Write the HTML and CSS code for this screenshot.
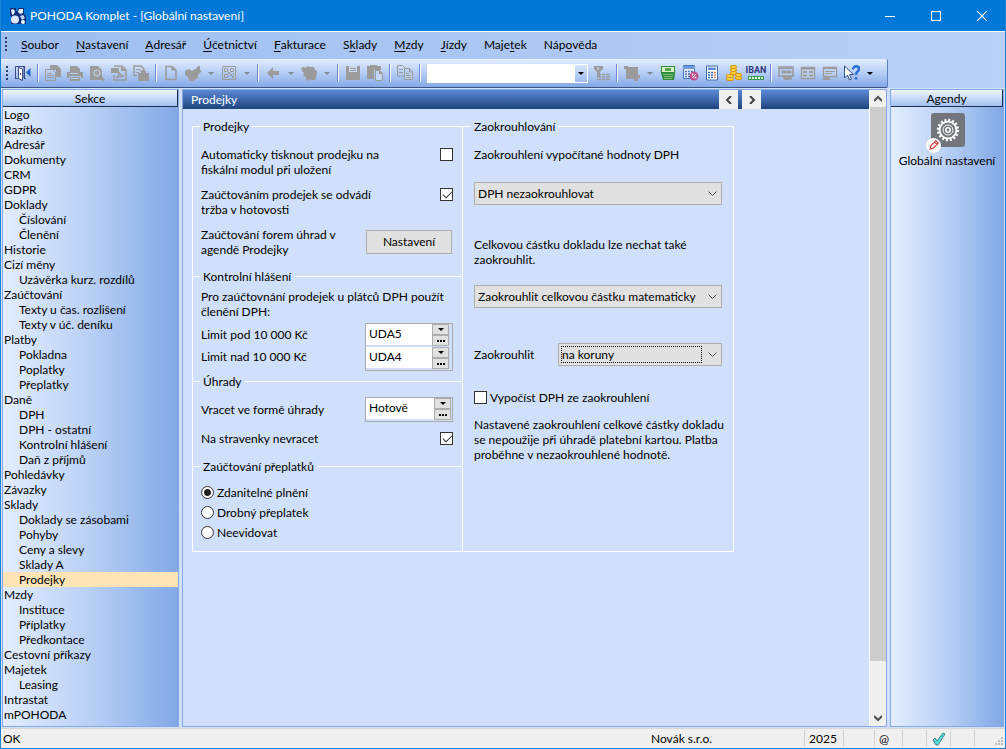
FILE: index.html
```html
<!DOCTYPE html>
<html lang="cs">
<head>
    <meta charset="UTF-8">
    <title>POHODA Komplet - [Globální nastavení]</title>
    <link rel="stylesheet" href="styles.css">
</head>
<body>
    <div class="window">
        <header class="title-bar">
            <svg class="app-icon" width="18" height="18" viewBox="0 0 18 18">
                <path d="M1 1h6v3h2V1h6v6l2 2v8H9L2 17V9H1z" fill="#10307c"/>
                <path d="M2 3l2-1 2 2-1 3-2 1zM10 2h4v4l-3 1-2-2z" fill="#e8f0ff"/>
                <circle cx="6" cy="12.500" r="4" fill="#dce8fc"/>
                <path d="M11 9l3-1 2 3-3 2z" fill="#c6d8f8"/>
                <circle cx="14" cy="15" r="2" fill="#f4f8ff"/>
            </svg>
            <span class="title-text">POHODA Komplet - [Globální nastavení]</span>
            <div class="window-buttons">
                <button aria-label="Minimalizovat"><svg width="10" height="10"><path d="M0 5.500h10" stroke="#fff"/></svg></button>
                <button aria-label="Maximalizovat"><svg width="10" height="10"><path d="M.5.5h9v9h-9z" fill="none" stroke="#fff"/></svg></button>
                <button aria-label="Zavřít"><svg width="10" height="10"><path d="M0 0l10 10M10 0L0 10" stroke="#fff" stroke-width="1.200"/></svg></button>
            </div>
        </header>

        <nav class="menu-bar">
            <span class="grip"></span>
            <button><u>S</u>oubor</button>
            <button><u>N</u>astavení</button>
            <button><u>A</u>dresář</button>
            <button><u>Ú</u>četnictví</button>
            <button><u>F</u>akturace</button>
            <button>S<u>k</u>lady</button>
            <button><u>M</u>zdy</button>
            <button><u>J</u>ízdy</button>
            <button>Maje<u>t</u>ek</button>
            <button>Náp<u>o</u>věda</button>
        </nav>

        <div class="toolbar-row">
            <div class="toolbar">
                <span class="grip"></span>
                <button class="tool" aria-label="Zavřít agendu">
                    <svg width="16" height="16" viewBox="0 0 16 16"><path d="M.5 13V1.500H9V13M0 13.500h3M9 13.500h2M9.500 1v13" stroke="#3b4a86" fill="none"/><path d="M3.500 2.500L7.500 4v11.500l-4-2z" fill="#fff" stroke="#3b4a86"/><path d="M15.500 3v9L11 7.500z" fill="#1f62c4"/><path d="M5.500 8v2" stroke="#3b4a86"/></svg>
                </button>
                <span class="separator"></span>
                <button class="tool" aria-label="Tiskové sestavy" disabled>
                    <svg width="16" height="16" viewBox="0 0 16 16"><path d="M5 0h7l4 4v8h-5V5H5z" fill="#9b9b9b"/><path d="M.5 4.500h7l3 3v8H.5z" fill="none" stroke="#9b9b9b"/><path d="M2 8.500h5M2 10.500h7M2 12.500h7" stroke="#9b9b9b"/></svg>
                </button>
                <button class="tool" aria-label="Tisk" disabled>
                    <svg width="16" height="16" viewBox="0 0 16 16"><path d="M3 1h7l3 3v3H3zM0 7h16v6h-2v-2H2v2H0zM3 12h10v4H3z" fill="#9b9b9b"/><path d="M3 8.500h8M4 13.500h8" stroke="#b9d0f4"/></svg>
                </button>
                <button class="tool" aria-label="Náhled" disabled>
                    <svg width="16" height="16" viewBox="0 0 16 16"><path d="M1 1h8l4 4v10H1z" fill="#9b9b9b"/><circle cx="8" cy="8" r="3.200" fill="#a4a4a4" stroke="#c4d7f6"/><path d="M10.500 10.500l4.500 5" stroke="#9b9b9b" stroke-width="2.500"/></svg>
                </button>
                <button class="tool" aria-label="Export do PDF" disabled>
                    <svg width="16" height="16" viewBox="0 0 16 16"><path d="M3 1h8l4 4v10H3V10" fill="none" stroke="#9b9b9b" stroke-width="1.500"/><path d="M10 1v5h5" fill="#9b9b9b"/><path d="M0 3h8v5H0z" fill="#9b9b9b"/><path d="M5 13c3-2 3-4 3-6 1 3 3 4 5 4-3 0-6 1-8 2z" fill="none" stroke="#9b9b9b" stroke-width="1.300"/></svg>
                </button>
                <button class="tool" aria-label="Dokumenty" disabled>
                    <svg width="16" height="16" viewBox="0 0 16 16"><path d="M1 1h7l3 3V6H7M1 .5v10h3" fill="none" stroke="#9b9b9b" stroke-width="1.500"/><path d="M3 4.500h4M3 7.500h3" stroke="#9b9b9b"/><path d="M5 8h3V6h5v2h3v8H5z" fill="#9b9b9b"/></svg>
                </button>
                <span class="separator"></span>
                <button class="tool" aria-label="Nový záznam" disabled>
                    <svg width="16" height="16" viewBox="0 0 16 16"><path d="M3 1.500h6L13 5v9.500H3z" fill="none" stroke="#9b9b9b" stroke-width="1.500"/><path d="M8.500 1v4.500H13" fill="#9b9b9b"/></svg>
                </button>
                <button class="tool" aria-label="Přenos" disabled>
                    <svg width="18" height="16" viewBox="0 0 18 16"><path d="M1 6l4-2 3 2 5-3 1-2h2v4l2 1-4 4v3l-4 2v1H5l-1-4-3-2z" fill="#9b9b9b"/></svg>
                </button>
                <button class="drop" aria-label="Možnosti přenosu" disabled><span class="arrow"></span></button>
                <button class="tool" aria-label="QR kód" disabled>
                    <svg width="14" height="14" viewBox="1 1 14 14"><path d="M1.500 1.500h13v13h-13z" fill="none" stroke="#9b9b9b"/><path d="M3.500 3.500h3v3h-3zM9.500 3.500h3v3h-3zM3.500 9.500h3v3h-3z" fill="none" stroke="#9b9b9b"/><path d="M9 9h2v2H9zM11 11h2v2h-2zM7 7h2v2H7zM12 8h1v2h-1z" fill="#9b9b9b"/></svg>
                </button>
                <button class="drop" aria-label="Možnosti QR kódu" disabled><span class="arrow"></span></button>
                <span class="separator"></span>
                <button class="tool" aria-label="Zpět" disabled>
                    <svg width="16" height="16" viewBox="0 0 16 16"><path d="M2 8l6-6v4h6v4H8v4z" fill="#9b9b9b"/></svg>
                </button>
                <button class="drop" aria-label="Historie" disabled><span class="arrow"></span></button>
                <button class="tool" aria-label="Záznam" disabled>
                    <svg width="16" height="16" viewBox="0 0 16 16"><path d="M0 3l3-1 2 1 1-2 3 1h4l1 3 2 1v3l-1 2v2l-1 2h-2l-1 1-2-2-2 2-2-1v-3l-3-1 1-3-2-2z" fill="#9b9b9b"/></svg>
                </button>
                <button class="drop" aria-label="Možnosti záznamu" disabled><span class="arrow"></span></button>
                <span class="separator"></span>
                <button class="tool" aria-label="Uložit" disabled>
                    <svg width="16" height="16" viewBox="0 0 16 16"><path d="M1 1h14v14H1z" fill="#9b9b9b"/><path d="M4 1h8v6H4z" fill="#c9dbf7"/><path d="M5 3.500h6M5 5.500h6" stroke="#9b9b9b"/></svg>
                </button>
                <button class="tool" aria-label="Vložit" disabled>
                    <svg width="16" height="16" viewBox="0 0 16 16"><path d="M0 1h3V0h7v1h4v4H7v9H0z" fill="#9b9b9b"/><path d="M8.500 5.500h4l3 3v7h-7z" fill="#c3d7f6" stroke="#9b9b9b"/><path d="M12 5v4h4" fill="#9b9b9b"/></svg>
                </button>
                <span class="separator"></span>
                <button class="tool" aria-label="Kopírovat" disabled>
                    <svg width="16" height="16" viewBox="0 0 16 16"><path d="M.5.500h5l3 3V11h-8z" fill="none" stroke="#9b9b9b"/><path d="M2 4.500h4M2 7.500h4" stroke="#9b9b9b"/><path d="M7.500 3.500h5l3 3v8h-8z" fill="#b9d0f5" stroke="#9b9b9b"/><path d="M9 8.500h3M9 10.500h5M9 12.500h5M12.500 3v4H16" stroke="#9b9b9b" fill="none"/></svg>
                </button>
                <span class="separator"></span>
                <div class="search">
                    <input type="text" aria-label="Hledat">
                    <button aria-label="Seznam hledání"><span class="arrow"></span></button>
                </div>
                <button class="tool" aria-label="Filtr" disabled>
                    <svg width="16" height="16" viewBox="0 0 16 16"><path d="M0 1h9v3L6 7v5H3V7L0 4z" fill="#9b9b9b"/><path d="M4 2v3" stroke="#dce8fc"/><path d="M3 9.500h4M8 9.500h3M12 9.500h4M3 12h4M8 12h3M12 12h4M3 14.500h4M8 14.500h3M12 14.500h4" stroke="#9b9b9b" stroke-width="1.300"/></svg>
                </button>
                <span class="separator"></span>
                <button class="tool" aria-label="Pohledy" disabled>
                    <svg width="16" height="16" viewBox="0 0 16 16"><path d="M0 1h4v1h10v8h2v3h-2v3h-4v-2H2V4H0z" fill="#9b9b9b"/></svg>
                </button>
                <button class="drop" aria-label="Výběr pohledu" disabled><span class="arrow"></span></button>
                <button class="tool" aria-label="Hotovost">
                    <svg width="16" height="16" viewBox="0 0 16 16"><path d="M1 1h14v7l-1 7H3L1 8z" fill="#2f8a3c"/><path d="M2 2h12v5H2z" fill="#d9f0c8"/><path d="M5 3h6v3H5z" fill="#58a84c"/><path d="M3 9.500h10M4 11.500h9M4 13.500h8" stroke="#7fbd78"/></svg>
                </button>
                <button class="tool" aria-label="Výpočet DPH">
                    <svg width="17" height="16" viewBox="0 0 17 16"><path d="M1.500.5h11v13h-11z" fill="#eaf2ff" stroke="#4472b8"/><path d="M1 1h12v3H1z" fill="#6f9bdc"/><path d="M3 6.500h2M6 6.500h2M9 6.500h2M3 9h2M6 9h2M3 11.500h2M6 11.500h2" stroke="#4472b8" stroke-width="1.500"/><circle cx="12" cy="11" r="4.500" fill="#c0508a"/><path d="M10.500 13l3-4" stroke="#fff"/><circle cx="10.500" cy="9.500" r=".9" fill="#fff"/><circle cx="13.500" cy="12.500" r=".9" fill="#fff"/></svg>
                </button>
                <button class="tool" aria-label="Kalkulačka">
                    <svg width="16" height="16" viewBox="0 0 16 16"><path d="M2.500 1h11v14h-11z" fill="#fff" stroke="#3a68b0"/><path d="M4 2.500h8V5H4z" fill="#5d8fd8"/><path d="M4 7.500h2M7 7.500h2M4 10h2M7 10h2M4 12.500h2M7 12.500h2" stroke="#3a68b0" stroke-width="1.500"/><path d="M10 7.500h2M10 10h2M10 12.500h2" stroke="#e28b5c" stroke-width="1.500"/></svg>
                </button>
                <button class="tool" aria-label="Mince">
                    <svg width="16" height="16" viewBox="0 0 16 16"><g fill="#ffd23c" stroke="#d99512"><rect x="4.500" y=".5" width="6" height="3" rx="1.500"/><rect x="4.500" y="3.500" width="6" height="3" rx="1.500"/><rect x="4.500" y="6.500" width="6" height="3" rx="1.500"/><rect x=".5" y="9.500" width="7" height="3" rx="1.500"/><rect x=".5" y="12.500" width="7" height="3" rx="1.500"/><rect x="9.500" y="8.500" width="6" height="3" rx="1.500"/><rect x="9.500" y="11.500" width="6" height="3" rx="1.500"/></g></svg>
                </button>
                <button class="tool iban" aria-label="IBAN">
                    <span>IBAN</span>
                    <svg width="16" height="4" viewBox="0 0 16 4"><path d="M0 0h16v4H0z" fill="#35a04b"/><path d="M1 2h14" stroke="#eaffea" stroke-width="2" stroke-dasharray="2 1"/></svg>
                </button>
                <span class="separator"></span>
                <button class="tool" aria-label="Poznámka" disabled>
                    <svg width="16" height="16" viewBox="0 0 16 16"><path d="M1 2h14v9h-2v3l-3-3H1z" fill="#b5cdf3" stroke="#9b9b9b" stroke-width="1.500"/><path d="M1 3.500h14M4 6h4v2H4zM9 6h4v2H9zM5 11h8l-3 4-4-1z" stroke="#9b9b9b" fill="#9b9b9b"/></svg>
                </button>
                <button class="tool" aria-label="Formulář" disabled>
                    <svg width="16" height="16" viewBox="0 0 16 16"><path d="M1.500 2.500h13v11h-13z" fill="#bcd2f5" stroke="#9b9b9b" stroke-width="1.300"/><path d="M1 3.500h14M3 7h4M3 10.500h4M9 7h4M9 10.500h4" stroke="#9b9b9b" stroke-width="2"/></svg>
                </button>
                <button class="tool" aria-label="Tabulka" disabled>
                    <svg width="16" height="16" viewBox="0 0 16 16"><path d="M1.500 2.500h13v9h-13z" fill="#bcd2f5" stroke="#9b9b9b" stroke-width="1.300"/><path d="M1 3h14" stroke="#9b9b9b" stroke-width="2"/><path d="M3 6.500h10M3 8.500h7" stroke="#9b9b9b"/><path d="M0 15l3-5 6 4-1 1z" fill="#9b9b9b"/></svg>
                </button>
                <button class="tool" aria-label="Nápověda">
                    <svg width="16" height="16" viewBox="0 0 16 16"><path d="M.5 1v12l3-3 2 5 2-1-2-4.500h4z" fill="#fff" stroke="#33528f"/><path d="M9 4.500C9 0 15 .5 15 4c0 2.500-3 2.500-3 6" fill="none" stroke="#2a6fd8" stroke-width="2.400"/><path d="M10.800 12h2.500v2.500h-2.500z" fill="#2a6fd8"/></svg>
                </button>
                <button class="drop" aria-label="Možnosti nápovědy"><span class="arrow"></span></button>
            </div>
        </div>

        <div class="workspace">
            <aside class="panel sections">
                <h2 class="panel-title">Sekce</h2>
                <nav class="section-list">
                    <a href="#">Logo</a>
                    <a href="#">Razítko</a>
                    <a href="#">Adresář</a>
                    <a href="#">Dokumenty</a>
                    <a href="#">CRM</a>
                    <a href="#">GDPR</a>
                    <a href="#">Doklady</a>
                    <a href="#" class="sub">Číslování</a>
                    <a href="#" class="sub">Členění</a>
                    <a href="#">Historie</a>
                    <a href="#">Cizí měny</a>
                    <a href="#" class="sub">Uzávěrka kurz. rozdílů</a>
                    <a href="#">Zaúčtování</a>
                    <a href="#" class="sub">Texty u čas. rozlišení</a>
                    <a href="#" class="sub">Texty v úč. deníku</a>
                    <a href="#">Platby</a>
                    <a href="#" class="sub">Pokladna</a>
                    <a href="#" class="sub">Poplatky</a>
                    <a href="#" class="sub">Přeplatky</a>
                    <a href="#">Daně</a>
                    <a href="#" class="sub">DPH</a>
                    <a href="#" class="sub">DPH - ostatní</a>
                    <a href="#" class="sub">Kontrolní hlášení</a>
                    <a href="#" class="sub">Daň z příjmů</a>
                    <a href="#">Pohledávky</a>
                    <a href="#">Závazky</a>
                    <a href="#">Sklady</a>
                    <a href="#" class="sub">Doklady se zásobami</a>
                    <a href="#" class="sub">Pohyby</a>
                    <a href="#" class="sub">Ceny a slevy</a>
                    <a href="#" class="sub">Sklady A</a>
                    <a href="#" class="sub selected">Prodejky</a>
                    <a href="#">Mzdy</a>
                    <a href="#" class="sub">Instituce</a>
                    <a href="#" class="sub">Příplatky</a>
                    <a href="#" class="sub">Předkontace</a>
                    <a href="#">Cestovní příkazy</a>
                    <a href="#">Majetek</a>
                    <a href="#" class="sub">Leasing</a>
                    <a href="#">Intrastat</a>
                    <a href="#">mPOHODA</a>
                </nav>
            </aside>

            <main class="panel content">
                <div class="page">
                    <div class="page-header">
                        <h1>Prodejky</h1>
                        <div class="pager">
                            <button aria-label="Předchozí"><svg width="8" height="8"><path d="M6 0L2 4l4 4" fill="none" stroke="#404040" stroke-width="2"/></svg></button>
                            <button aria-label="Další"><svg width="8" height="8"><path d="M2 0l4 4-4 4" fill="none" stroke="#404040" stroke-width="2"/></svg></button>
                        </div>
                    </div>

                    <form class="settings">
                        <div class="column">
                            <fieldset class="group receipts">
                                <legend>Prodejky</legend>
                                <div class="row top">
                                    <label for="autoprint">Automaticky tisknout prodejku na<br>fiskální modul při uložení</label>
                                    <input type="checkbox" id="autoprint">
                                </div>
                                <div class="row top">
                                    <label for="cash">Zaúčtováním prodejek se odvádí<br>tržba v hotovosti</label>
                                    <input type="checkbox" id="cash" checked>
                                </div>
                                <div class="row">
                                    <label for="forms">Zaúčtování forem úhrad v<br>agendě Prodejky</label>
                                    <button type="button" class="push" id="forms">Nastavení</button>
                                </div>
                            </fieldset>

                            <fieldset class="group report">
                                <legend>Kontrolní hlášení</legend>
                                <p>Pro zaúčtovnání prodejek u plátců DPH použít<br>členění DPH:</p>
                                <div class="row">
                                    <div class="limit-labels">
                                        <label for="under">Limit pod 10 000 Kč</label>
                                        <label for="over">Limit nad 10 000 Kč</label>
                                    </div>
                                    <div class="picker-box">
                                        <div class="picker">
                                            <input type="text" id="under" value="UDA5">
                                            <div class="picker-buttons">
                                                <button type="button" aria-label="Seznam"><span class="arrow"></span></button>
                                                <button type="button" aria-label="Agenda"><span class="dots"></span></button>
                                            </div>
                                        </div>
                                        <div class="picker">
                                            <input type="text" id="over" value="UDA4">
                                            <div class="picker-buttons">
                                                <button type="button" aria-label="Seznam"><span class="arrow"></span></button>
                                                <button type="button" aria-label="Agenda"><span class="dots"></span></button>
                                            </div>
                                        </div>
                                    </div>
                                </div>
                            </fieldset>

                            <fieldset class="group payments">
                                <legend>Úhrady</legend>
                                <div class="row">
                                    <label for="refund">Vracet ve formě úhrady</label>
                                    <div class="picker-box narrow">
                                        <div class="picker">
                                            <input type="text" id="refund" value="Hotově">
                                            <div class="picker-buttons">
                                                <button type="button" aria-label="Seznam"><span class="arrow"></span></button>
                                                <button type="button" aria-label="Agenda"><span class="dots"></span></button>
                                            </div>
                                        </div>
                                    </div>
                                </div>
                                <div class="row">
                                    <label for="vouchers">Na stravenky nevracet</label>
                                    <input type="checkbox" id="vouchers" checked>
                                </div>
                            </fieldset>

                            <fieldset class="group overpay">
                                <legend>Zaúčtování přeplatků</legend>
                                <label class="choice"><input type="radio" name="overpay" checked>Zdanitelné plnění</label>
                                <label class="choice"><input type="radio" name="overpay">Drobný přeplatek</label>
                                <label class="choice"><input type="radio" name="overpay">Neevidovat</label>
                            </fieldset>
                        </div>

                        <fieldset class="group rounding">
                            <legend>Zaokrouhlování</legend>
                            <label for="vat">Zaokrouhlení vypočítané hodnoty DPH</label>
                            <select id="vat"><option>DPH nezaokrouhlovat</option></select>
                            <label for="total">Celkovou částku dokladu lze nechat také<br>zaokrouhlit.</label>
                            <select id="total"><option>Zaokrouhlit celkovou částku matematicky</option></select>
                            <div class="row">
                                <label for="unit">Zaokrouhlit</label>
                                <div class="focus-field">
                                    <select id="unit"><option>na koruny</option></select>
                                </div>
                            </div>
                            <label class="choice"><input type="checkbox">Vypočíst DPH ze zaokrouhlení</label>
                            <p>Nastavené zaokrouhlení celkové částky dokladu<br>se nepoužije při úhradě platební kartou. Platba<br>proběhne v nezaokrouhlené hodnotě.</p>
                        </fieldset>
                    </form>
                </div>
                <div class="scrollbar">
                    <button aria-label="Nahoru"><svg width="8" height="8"><path d="M0 6l4-4 4 4" fill="none" stroke="#505050" stroke-width="2"/></svg></button>
                    <div class="track"><div class="thumb"></div></div>
                    <button aria-label="Dolů"><svg width="8" height="8"><path d="M0 2l4 4 4-4" fill="none" stroke="#505050" stroke-width="2"/></svg></button>
                </div>
            </main>

            <aside class="panel agendas">
                <h2 class="panel-title">Agendy</h2>
                <button class="agenda">
                    <svg width="42" height="40" viewBox="0 0 42 40">
                        <rect x="5" y="0" width="34" height="34" rx="3" fill="#73757c"/>
                        <circle cx="22" cy="17" r="10" fill="none" stroke="#fff" stroke-width="2.400" stroke-dasharray="2 1.927"/>
                        <circle cx="22" cy="17" r="8.400" fill="none" stroke="#fff" stroke-width="1.800"/>
                        <circle cx="22" cy="17" r="5" fill="none" stroke="#fff"/>
                        <circle cx="22" cy="17" r="2.200" fill="none" stroke="#fff" stroke-width="1.600"/>
                        <circle cx="7.500" cy="32.500" r="7.500" fill="#fff"/>
                        <path d="M4 36l.8-3.200 5-5 2.400 2.400-5 5zM8.500 29l2.400 2.400" fill="none" stroke="#e04444" stroke-width="1.200"/>
                    </svg>
                    <span>Globální nastavení</span>
                </button>
            </aside>
        </div>

        <footer class="status-bar">
            <span class="status">OK</span>
            <span class="company">Novák s.r.o.</span>
            <span class="cell year">2025</span>
            <span class="cell blank"></span>
            <span class="cell at">@</span>
            <span class="cell"></span>
            <span class="cell"><svg width="14" height="14" viewBox="0 0 14 14"><path d="M1 8l2-2 2 3 6-8 2 1-7 11H4z" fill="#4fe0dc" stroke="#4a7f86"/></svg></span>
            <span class="cell"></span>
            <span class="cell size">
                <svg width="8" height="8"><path d="M6 0h2v2H6zM3 3h2v2H3zM6 3h2v2H6zM0 6h2v2H0zM3 6h2v2H3zM6 6h2v2H6z" fill="#bdbdbd"/></svg>
            </span>
        </footer>
    </div>
</body>
</html>
```
FILE: styles.css
```css
* {
    box-sizing: border-box;
}

body {
    margin: 0;
    font-family: Lato, "Open Sans", sans-serif;
    font-size: 12px;
    line-height: 15px;
    color: #000;
}

button, input, select {
    font: inherit;
    color: inherit;
}

button {
    display: flex;
    align-items: center;
    justify-content: center;
    margin: 0;
    padding: 0;
    border: 0;
    background: none;
}

h1, h2, p {
    margin: 0;
    font-size: 12px;
    font-weight: 400;
}

.window {
    display: flex;
    flex-direction: column;
    min-height: 100vh;
    border: 1px solid #1883d7;
    border-top: 0;
    background: #d0e0fa;
}

/* title */
.title-bar {
    display: flex;
    align-items: center;
    height: 31px;
    padding-left: 8px;
    background: #0078d7;
    color: #fff;
}

.title-text {
    margin-left: 3px;
}

.window-buttons {
    display: flex;
    margin-left: auto;
}

.window-buttons button {
    width: 46px;
    height: 31px;
}

/* menu */
.menu-bar {
    display: flex;
    align-items: center;
    height: 28px;
    padding: 0 0 2px 4px;
    border-top: 1px solid #fff;
    background: linear-gradient(to right, #9ebef0, #b9d1f6);
}

.menu-bar button {
    padding: 0 8px 0 9px;
}

.menu-bar .grip {
    margin-right: 4px;
}

.menu-bar u {
    text-underline-offset: 2px;
}

.grip {
    flex: none;
    width: 3px;
    height: 15px;
    margin-right: 3px;
    background: repeating-linear-gradient(to bottom, #27406f 0, #27406f 2px, transparent 2px, transparent 4px) left / 2px 100% no-repeat;
}

/* toolbar */
.toolbar-row {
    background: linear-gradient(to right, #9ebef0, #b9d1f6);
    padding-right: 117px;
}

.toolbar {
    display: flex;
    align-items: center;
    height: 29px;
    padding-left: 5px;
    border-bottom: 1px solid #3b5580;
    border-right: 1px solid #5c7fb8;
    border-radius: 0 2px 2px 0;
    background: linear-gradient(to bottom, #e3edfe, #b4cdf5 50%, #84a9e6);
}

.tool {
    flex: none;
    width: 22px;
    height: 22px;
}

.drop {
    flex: none;
    width: 14px;
    height: 22px;
}

.arrow {
    width: 0;
    height: 0;
    border: 3px solid transparent;
    border-top-color: #000;
    border-bottom: 0;
}

.drop:disabled .arrow {
    border-top-color: #7c8797;
}

.separator {
    flex: none;
    width: 2px;
    height: 18px;
    margin: 0 3px;
    background: #6a8ccb;
    border-right: 1px solid #fff;
}

.search {
    display: flex;
    width: 161px;
    height: 19px;
    margin: 0 3px;
    background: #fff;
}

.search input {
    flex: 1;
    min-width: 0;
    border: 0;
    outline: 0;
    background: #fff;
}

.search button {
    width: 12px;
    margin: 1px;
    background: linear-gradient(to bottom, #d6e4fb, #9dbcf0);
}

.iban {
    flex-direction: column;
    gap: 1px;
}

.iban span {
    font-family: "Liberation Sans Narrow", Roboto, sans-serif;
    font-size: 9px;
    line-height: 9px;
    font-weight: 700;
    color: #333a7c;
}

/* panels */
.workspace {
    display: flex;
    flex: 1;
    gap: 3px;
    padding: 1px 1px 0;
}

.panel {
    border: 1px solid #84a9e6;
}

.panel-title {
    height: 17px;
    border-right: 1px solid #1d2f4f;
    border-bottom: 1px solid #1d2f4f;
    background: linear-gradient(to bottom, #f0f6ff, #a3c1f2);
    text-align: center;
    line-height: 17px;
}

.sections {
    width: 177px;
    background: linear-gradient(to right, #e3edfe, #b9d0f5 50%, #82a8e6);
}

.section-list {
    display: flex;
    flex-direction: column;
}

.section-list a {
    padding-left: 1px;
    color: #000;
    text-decoration: none;
}

.section-list .sub {
    padding-left: 16px;
}

.section-list .selected {
    background: #ffe5b5;
}

.content {
    display: flex;
    flex: 1;
    min-width: 0;
}

.page {
    flex: 1;
    min-width: 0;
}

.page-header {
    display: flex;
    align-items: center;
    height: 19px;
    padding: 0 108px 0 8px;
    background: linear-gradient(to bottom, #5a89d4, #1e447f);
    color: #fff;
}

.pager {
    display: flex;
    gap: 4px;
    margin-left: auto;
}

.pager button {
    width: 19px;
    height: 19px;
    background: #f0f0f0;
}

.scrollbar {
    display: flex;
    flex-direction: column;
    width: 17px;
    border-left: 1px solid #fff;
    background: #f0f0f0;
}

.scrollbar button {
    height: 17px;
}

.track {
    flex: 1;
}

.thumb {
    height: 92%;
    background: #cdcdcd;
}

.agendas {
    width: 114px;
    background: linear-gradient(to right, #e3edfe, #b9d0f5 50%, #82a8e6);
}

.agenda {
    flex-direction: column;
    width: 100%;
    padding-top: 6px;
    white-space: nowrap;
}

/* settings form */
.settings {
    display: grid;
    grid-template-columns: 270px 272px;
    width: max-content;
    margin: 10px 9px;
    border-bottom: 1px solid #fff;
}

.group {
    min-width: 0;
    margin: 0;
    padding: 0 8px 8px;
    border: 1px solid #fff;
    border-width: 1px 0 0 1px;
}

.group legend {
    margin-left: -1px;
    padding: 0 3px;
}

.group p {
    white-space: nowrap;
}

.column {
    display: flex;
    flex-direction: column;
}

.column .group {
    margin-bottom: -8px;
}

.row {
    display: flex;
    align-items: center;
    justify-content: space-between;
}

.row.top {
    align-items: flex-start;
}

.receipts {
    height: 158px;
    padding-top: 13px;
}

.receipts .row {
    margin-bottom: 10px;
}

.report {
    height: 113px;
    padding-top: 5px;
}

.report .row {
    margin-top: 4px;
}

.payments {
    height: 93px;
    padding-top: 8px;
}

.payments .row + .row {
    margin-top: 9px;
}

.column .overpay {
    margin-bottom: 0;
    padding-top: 8px;
    padding-bottom: 9px;
}

.limit-labels {
    display: flex;
    flex-direction: column;
    gap: 7px;
    padding-bottom: 3px;
}

.choice {
    display: flex;
    align-items: center;
    gap: 3px;
}

.overpay .choice {
    height: 20px;
}

input[type="checkbox"], input[type="radio"] {
    appearance: none;
    flex: none;
    width: 13px;
    height: 13px;
    margin: 0;
    border: 1px solid #333;
    background: #fff;
}

input[type="radio"] {
    border-radius: 50%;
}

input[type="radio"]:checked {
    background: radial-gradient(circle, #222 0, #222 3px, #fff 4px);
}

input[type="checkbox"]:checked::before {
    content: "";
    display: block;
    width: 4px;
    height: 8px;
    margin-left: 4px;
    border: solid #333;
    border-width: 0 1px 1px 0;
    transform: rotate(45deg);
}

.row > input[type="checkbox"] {
    margin-right: 1px;
}

.row.top > input[type="checkbox"] {
    margin-top: 1px;
}

.push {
    width: 86px;
    height: 24px;
    margin-right: 2px;
    padding-bottom: 2px;
    border: 1px solid #adadad;
    background: #e1e1e1;
}

.picker-box {
    display: flex;
    flex-direction: column;
    gap: 1px;
    width: 88px;
    padding: 0 3px 1px 0;
    margin-right: 1px;
    border: 1px solid #ababab;
}

.picker-box.narrow {
    padding-right: 1px;
}

.picker {
    display: flex;
    height: 22px;
}

.picker input {
    flex: 1;
    min-width: 0;
    height: 21px;
    padding: 0 3px;
    padding-bottom: 3px;
    border: 0;
    outline: 0;
    background: #fff;
}

.picker-buttons {
    display: flex;
    flex-direction: column;
    width: 17px;
}

.picker-buttons button {
    height: 11px;
    border: 1px solid #adadad;
    background: #e1e1e1;
}

.dots {
    width: 8px;
    height: 2px;
    background: repeating-linear-gradient(to right, #000 0, #000 2px, transparent 2px, transparent 3px);
}

.rounding {
    display: flex;
    flex-direction: column;
    border-right-width: 1px;
    padding: 13px 7px 0 11px;
    white-space: nowrap;
}

.rounding legend {
    margin-left: -3px;
}

select {
    appearance: none;
    width: 248px;
    height: 23px;
    padding: 0 20px 0 3px;
    border: 1px solid #adadad;
    border-radius: 0;
    outline: 0;
    background-color: #e1e1e1;
    background-image: url("data:image/svg+xml,%3Csvg xmlns='http://www.w3.org/2000/svg' width='9' height='6'%3E%3Cpath d='M.5.5l4 4 4-4' fill='none' stroke='%23505050'/%3E%3C/svg%3E");
    background-repeat: no-repeat;
    background-position: right 4px center;
}

.rounding > select {
    margin: 20px 0 32px;
}

.rounding > label + select + label + select {
    margin: 18px 0 35px;
}

.focus-field {
    position: relative;
    margin-right: 4px;
}

.focus-field select {
    display: block;
    width: 164px;
}

/* dotted focus rectangle inside the list */
.focus-field::after {
    content: "";
    position: absolute;
    inset: 3px 20px 3px 3px;
    border: 1px dotted #000;
    pointer-events: none;
}

.rounding > .choice {
    margin: 24px 0 12px;
}

/* status bar */
.status-bar {
    display: flex;
    height: 20px;
    margin-top: 1px;
    border-top: 1px solid #d7d7d7;
    background: #f0f0f0;
    line-height: 20px;
}

.status {
    flex: 1;
    padding-left: 2px;
}

.company {
    width: 153px;
}

.cell {
    display: flex;
    align-items: center;
    justify-content: center;
    width: 24px;
    margin: 1px 0;
    border-left: 1px solid #d0d0d0;
}

.year {
    justify-content: flex-start;
    width: 39px;
    padding-left: 4px;
}

.blank {
    width: 31px;
}

.at {
    width: 28px;
    justify-content: flex-start;
    padding-left: 4px;
}

.size {
    width: 31px;
    align-items: flex-end;
    justify-content: flex-end;
    padding: 0 2px 2px 0;
}
```
